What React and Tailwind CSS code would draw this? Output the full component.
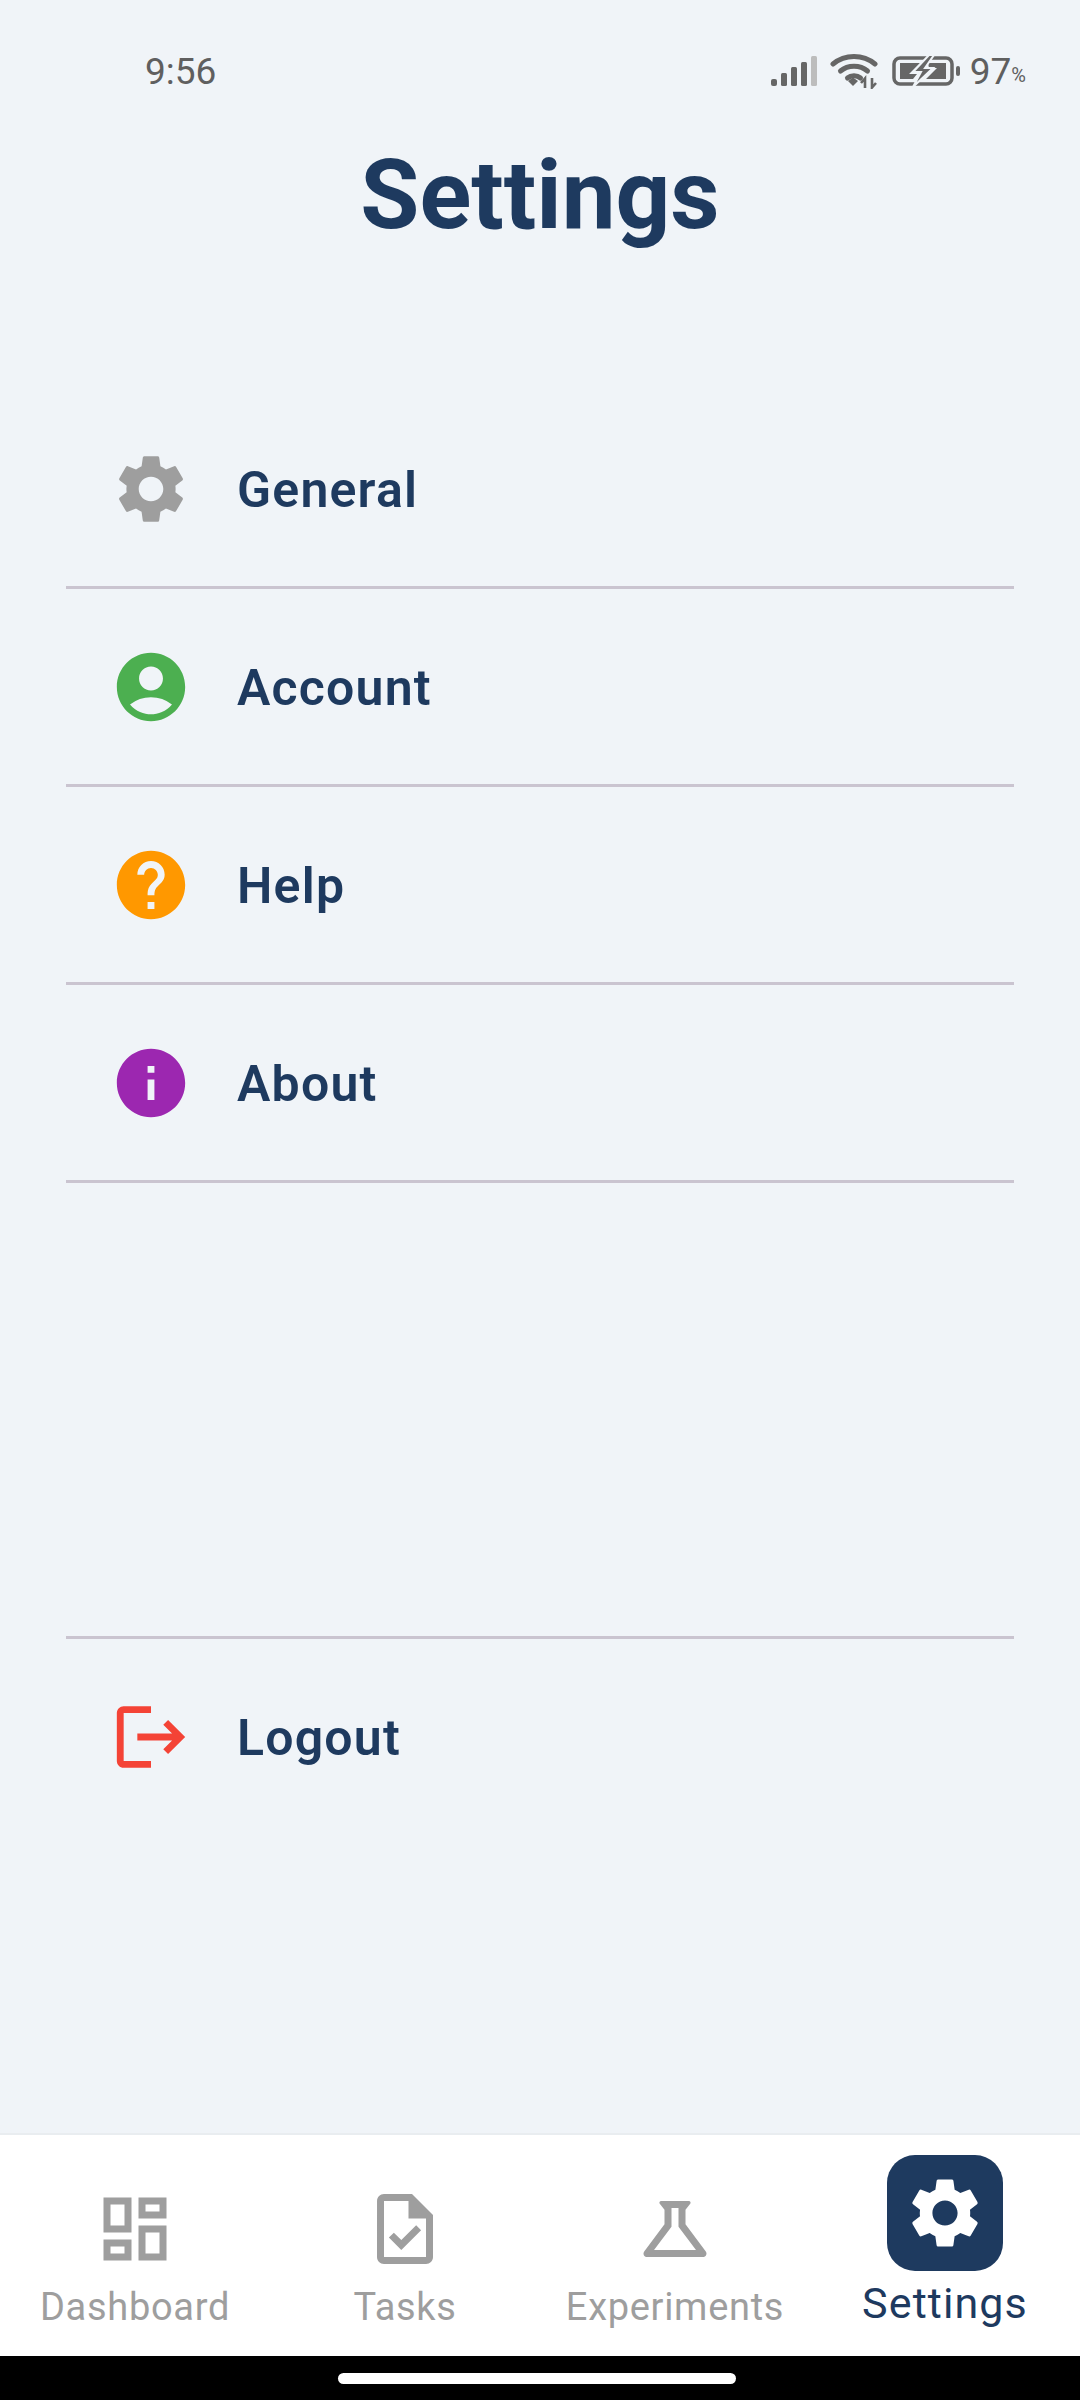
import React from "react";
import {
  MdSettings,
  MdAccountCircle,
  MdHelp,
  MdInfo,
  MdLogout,
  MdOutlineDashboard,
  MdOutlineTask,
  MdOutlineScience,
} from "react-icons/md";

const rows = [
  { label: "General", Icon: MdSettings, color: "text-[#9e9e9e]" },
  { label: "Account", Icon: MdAccountCircle, color: "text-[#4caf50]" },
  { label: "Help", Icon: MdHelp, color: "text-[#ff9800]" },
  { label: "About", Icon: MdInfo, color: "text-[#9c27b0]" },
];

const tabs = [
  { label: "Dashboard", Icon: MdOutlineDashboard },
  { label: "Tasks", Icon: MdOutlineTask },
  { label: "Experiments", Icon: MdOutlineScience },
];

const SignalIcon = () => (
  <svg width="48" height="32" viewBox="0 0 48 32" className="block">
    <rect x="1" y="24" width="6" height="7" rx="2" fill="#666" />
    <rect x="11" y="18" width="6" height="13" rx="1.5" fill="#666" />
    <rect x="21" y="12" width="6" height="19" rx="1.5" fill="#666" />
    <rect x="31" y="7" width="6" height="24" rx="1.5" fill="#666" />
    <rect x="41" y="1" width="6" height="30" rx="1.5" fill="#bdbdbd" />
  </svg>
);

const WifiIcon = () => (
  <svg width="48" height="36" viewBox="0 0 48 36" className="block" fill="none">
    <path d="M3 11 C15 1 33 1 45 11" stroke="#666" strokeWidth="5" strokeLinecap="round" />
    <path d="M10.5 18 C18 11.5 30 11.5 37.5 18" stroke="#666" strokeWidth="5" strokeLinecap="round" />
    <path d="M17.5 25 C21 22 27 22 30.5 25" stroke="#666" strokeWidth="5" strokeLinecap="round" />
    <path d="M18 28 L23 24.5 L28 28 L23 33 Z" fill="#666" />
    <path d="M31 30 L35 25.5 V35 M42 25 V34.5 L46 30" stroke="#666" strokeWidth="2.6" />
  </svg>
);

const BatteryIcon = () => (
  <svg width="70" height="32" viewBox="0 0 70 32" className="block" fill="none">
    <rect x="2" y="3" width="58" height="26" rx="6" stroke="#666" strokeWidth="3.5" />
    <path d="M8 8 H28 L17 19 H25 L21 24 H8 Z" fill="#666" />
    <path d="M36 8 H54 V24 H34 L45 13 H37 Z" fill="#666" />
    <path d="M37 0 L21 17 H29 L21 32 L41 13 H33 L42 0 Z" fill="#666" stroke="#f0f4f8" strokeWidth="2" />
    <rect x="64" y="11" width="4" height="10" rx="2" fill="#666" />
  </svg>
);

const SettingRow = ({ label, Icon, color, className }) => (
  <div className={`flex items-center box-content h-[195px] pl-[44px] ${className}`}>
    <Icon size={82} className={`${color} shrink-0`} />
    <span className="ml-[45px] mt-[3px] text-[50px] font-semibold tracking-[1.2px] text-[#1e3a5f]">
      {label}
    </span>
  </div>
);

export default function App() {
  return (
    <div
      className="flex flex-col h-[2400px] w-[1080px] bg-[#f0f4f8] overflow-hidden"
      style={{ fontFamily: "Roboto, sans-serif" }}
    >
      <div className="flex items-center justify-between h-[50px] mt-[46px] pl-[145px] pr-[54px]">
        <span className="text-[37px] leading-none text-[#5f5f5f]">9:56</span>
        <div className="flex items-center">
          <SignalIcon />
          <div className="ml-[12px]">
            <WifiIcon />
          </div>
          <div className="ml-[14px]">
            <BatteryIcon />
          </div>
          <span className="ml-[8px] text-[37px] leading-none text-[#5f5f5f]">97</span>
          <span className="mt-[8px] text-[20px] leading-none text-[#5f5f5f]">%</span>
        </div>
      </div>

      <h1 className="mt-[43px] h-[252px] text-center text-[96px] leading-[112px] font-bold text-[#1e3a5f]">
        Settings
      </h1>

      <div className="px-[66px]">
        {rows.map((row) => (
          <SettingRow key={row.label} {...row} className="border-b-[3px] border-[#cac4d0]" />
        ))}
        <div className="mt-[453px] border-t-[3px] border-[#cac4d0]">
          <SettingRow label="Logout" Icon={MdLogout} color="text-[#f44336]" />
        </div>
      </div>

      <div className="flex-1" />

      <div className="grid grid-cols-4 h-[223px] bg-white border-t-2 border-[#e9edf0]">
        {tabs.map(({ label, Icon }) => (
          <div key={label} className="flex flex-col items-center justify-end pb-[13px]">
            <Icon size={84} className="text-[#9e9e9e]" />
            <span className="h-[72px] text-[38px] leading-[72px] text-[#9e9e9e] tracking-[0.7px]">
              {label}
            </span>
          </div>
        ))}
        <div className="flex flex-col items-center justify-end pb-[13px]">
          <div className="flex items-center justify-center w-[116px] h-[116px] rounded-[28px] bg-[#1e3a5f]">
            <MdSettings size={84} className="text-white" />
          </div>
          <span className="h-[72px] text-[43px] leading-[64px] tracking-[1.1px] text-[#1e3a5f]">Settings</span>
        </div>
      </div>

      <div className="flex items-center justify-center h-[44px] bg-black">
        <div className="w-[398px] h-[11px] mr-[7px] rounded-full bg-white" />
      </div>
    </div>
  );
}
